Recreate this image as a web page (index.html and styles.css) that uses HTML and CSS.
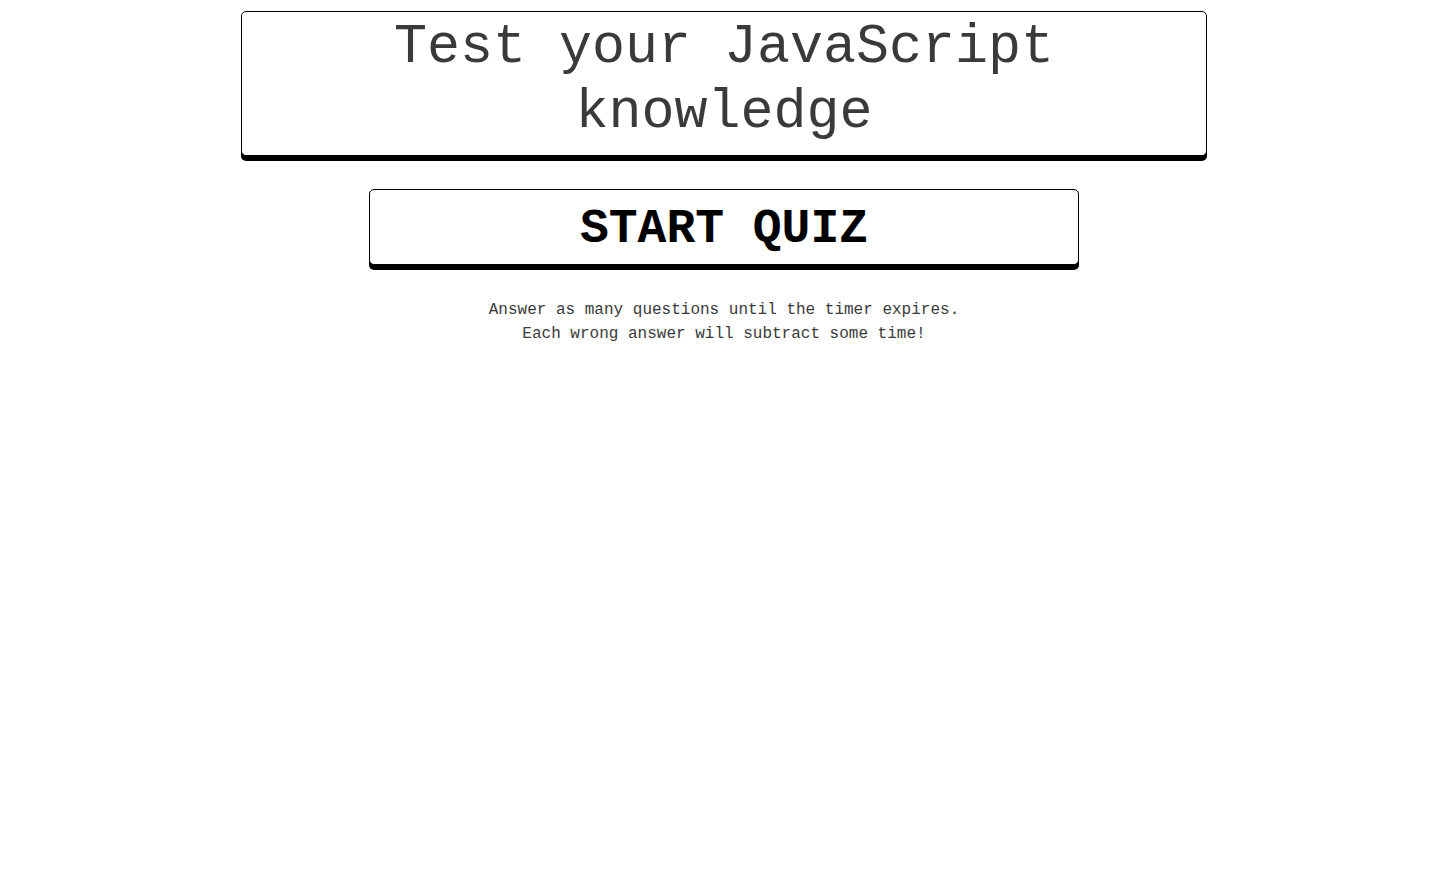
FILE: index.html
```html
<!DOCTYPE html>
<html lang="en">
<head>
<meta charset="utf-8">
<title>JavaScript Quiz</title>
<link rel="stylesheet" href="styles.css">
</head>
<body>
<main class="page">
  <header class="title-card">
    <h1 class="title">Test your JavaScript knowledge</h1>
  </header>
  <button class="start-btn" type="button">START QUIZ</button>
  <p class="instructions">Answer as many questions until the timer expires.<br>Each wrong answer will subtract some time!</p>
</main>
</body>
</html>
```

FILE: styles.css
```css
html, body {
  margin: 0;
  padding: 0;
  background: #fff;
}

body {
  font-family: "Liberation Mono", "Courier New", monospace;
  color: #333;
}

.page {
  display: flex;
  flex-direction: column;
  align-items: center;
  padding-top: 11px;
}

.title-card {
  box-sizing: border-box;
  width: 966px;
  border: 1px solid #000;
  border-radius: 5px;
  box-shadow: 0 5px 0 #000;
  padding: 3px 20px 10px;
  background: #fff;
}

.title {
  margin: 0;
  font-family: "Liberation Mono", "Courier New", monospace;
  font-weight: normal;
  font-size: 55px;
  line-height: 65px;
  text-align: center;
  color: #3a3a3a;
}

.start-btn {
  box-sizing: border-box;
  margin-top: 33px;
  width: 710px;
  height: 76px;
  border: 1px solid #000;
  border-radius: 5px;
  box-shadow: 0 5px 0 #000;
  background: #fff;
  font-family: "Liberation Mono", "Courier New", monospace;
  font-weight: bold;
  font-size: 48px;
  color: #000;
  padding: 4px 0 0;
  cursor: pointer;
}

.instructions {
  margin: 33px 0 0;
  font-size: 16px;
  line-height: 24px;
  text-align: center;
  color: #3a3a3a;
}
```
